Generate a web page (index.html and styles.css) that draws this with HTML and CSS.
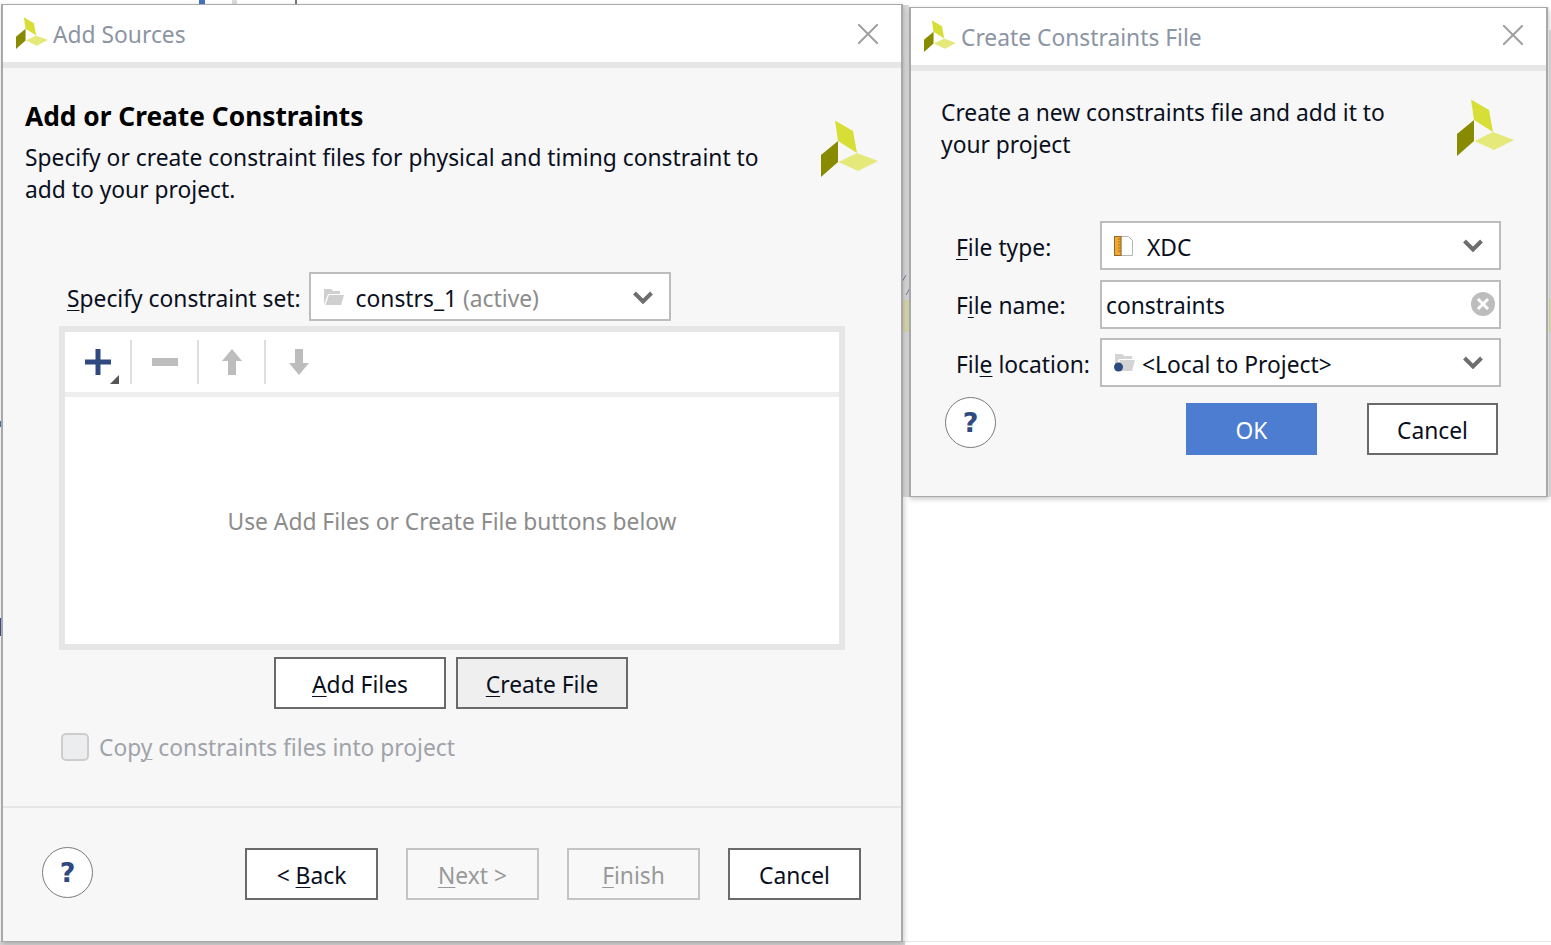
FILE: index.html
```html
<!DOCTYPE html>
<html lang="en">
<head>
    <meta charset="UTF-8">
    <title>Add Sources</title>
    <link rel="stylesheet" href="styles.css">
</head>
<body>
    <!-- scraps of the window behind -->
    <div class="scrap scrap-blue"></div>
    <div class="scrap scrap-gray"></div>
    <div class="scrap scrap-dark"></div>
    <div class="scrap scrap-gap"></div>
    <div class="scrap scrap-right"></div>
    <div class="scrap scrap-yellow"></div>
    <div class="scrap scrap-yellow2"></div>
    <div class="scrap scrap-leftblue"></div>
    <div class="scrap scrap-leftblue2"></div>
    <div class="scrap scrap-bottom"></div>
    <div class="scrap scrap-line"></div>
    <svg class="scrap scrap-ticks" viewBox="0 0 8 20"><path d="M0 7L4 0M4 20L8 13"/></svg>

    <!-- Add Sources -->
    <div class="dialog sources">
        <div class="titlebar">
            <svg class="logo-small" viewBox="0 0 57 57"><use href="#logo"/></svg>
            <span class="title-text">Add Sources</span>
            <svg class="close" viewBox="0 0 20 20"><path d="M0 0L20 20M20 0L0 20"/></svg>
        </div>
        <div class="body sources-body">
            <div class="intro">
                <div class="intro-text">
                    <h1>Add or Create Constraints</h1>
                    <p>Specify or create constraint files for physical and timing constraint to add to your project.</p>
                </div>
                <svg class="logo-big" viewBox="0 0 57 57">
                    <defs>
                        <g id="logo">
                            <polygon points="14,0.500 32,11 36,33 17,21" fill="#d7df36"/>
                            <polygon points="0,35 17,21 17,42 0,57" fill="#888a00"/>
                            <polygon points="17.500,42 36,33 57,41 37,51" fill="#e4e97a"/>
                        </g>
                    </defs>
                    <use href="#logo"/>
                </svg>
            </div>
            <div class="set-row">
                <label class="lbl"><u>S</u>pecify constraint set:</label>
                <div class="combo set-combo">
                    <svg class="folder" viewBox="0 0 21 18"><path d="M1 17V1h7l2 2h7v3H5L1 17z" fill="#cfcfcf"/><path d="M2.500 17L6 7h15l-3 10z" fill="#cfcfcf"/></svg>
                    <span class="combo-text">constrs_1 <span class="muted">(active)</span></span>
                    <svg class="chevron" viewBox="0 0 20 13"><path d="M1.500 2L10 10.500 18.500 2"/></svg>
                </div>
            </div>
            <div class="files">
                <div class="toolbar">
                    <div class="tool tool-add">
                        <svg viewBox="0 0 26 26"><path d="M10.500 0h5v10.500H26v5H15.500V26h-5V15.500H0v-5h10.500z" fill="#2f4a80"/></svg>
                        <span class="corner"></span>
                    </div>
                    <div class="tool">
                        <svg viewBox="0 0 26 8" class="minus"><rect width="26" height="8" fill="#bdbdbd"/></svg>
                    </div>
                    <div class="tool">
                        <svg viewBox="0 0 20 26" class="arrow"><path d="M10 0l10 12h-6v14H6V12H0z" fill="#bdbdbd"/></svg>
                    </div>
                    <div class="tool last">
                        <svg viewBox="0 0 20 26" class="arrow"><path d="M6 0h8v14h6L10 26 0 14h6z" fill="#bdbdbd"/></svg>
                    </div>
                </div>
                <div class="file-list">Use Add Files or Create File buttons below</div>
            </div>
            <div class="file-buttons">
                <button class="btn wide"><u>A</u>dd Files</button>
                <button class="btn wide focused"><u>C</u>reate File</button>
            </div>
            <div class="copy-row">
                <span class="check"></span>
                <span class="copy-text">Cop<u>y</u> constraints files into project</span>
            </div>
        </div>
        <div class="footer">
            <div class="help">?</div>
            <div class="footer-buttons">
                <button class="btn">&lt;&nbsp;<u>B</u>ack</button>
                <button class="btn off"><u>N</u>ext &gt;</button>
                <button class="btn off"><u>F</u>inish</button>
                <button class="btn">Cancel</button>
            </div>
        </div>
    </div>

    <!-- Create Constraints File -->
    <div class="dialog create">
        <div class="titlebar">
            <svg class="logo-small" viewBox="0 0 57 57"><use href="#logo"/></svg>
            <span class="title-text">Create Constraints File</span>
            <svg class="close" viewBox="0 0 20 20"><path d="M0 0L20 20M20 0L0 20"/></svg>
        </div>
        <div class="body create-body">
            <div class="intro">
                <p class="create-text">Create a new constraints file and add it to your project</p>
                <svg class="logo-big" viewBox="0 0 57 57"><use href="#logo"/></svg>
            </div>
            <div class="form">
                <label class="lbl"><u>F</u>ile type:</label>
                <div class="combo">
                    <svg class="xdc" viewBox="0 0 19 20"><path d="M7 .500h7.500l4 4v15H7z" fill="#fff" stroke="#b5b5b5"/><rect x=".500" y=".500" width="6.500" height="19" fill="#f5a830" stroke="#8d6a2c"/><path d="M4 3h3M4 6h3M4 9h3M4 12h3M4 15h3" stroke="#a8711a"/></svg>
                    <span class="combo-text">XDC</span>
                    <svg class="chevron" viewBox="0 0 20 13"><path d="M1.500 2L10 10.500 18.500 2"/></svg>
                </div>
                <label class="lbl">F<u>i</u>le name:</label>
                <div class="combo name">
                    <span class="combo-text">constraints</span>
                    <svg class="clear" viewBox="0 0 24 24"><circle cx="12" cy="12" r="12" fill="#bdbdbd"/><path d="M7 7l10 10M17 7L7 17" stroke="#fff" stroke-width="3"/></svg>
                </div>
                <label class="lbl">Fil<u>e</u> location:</label>
                <div class="combo">
                    <svg class="loc" viewBox="0 0 21 19"><path d="M1 14V1h7l2 2h8v3H5L2 14z" fill="#d4d4d4"/><path d="M3 18l3-11h15l-3 11z" fill="#d4d4d4"/><circle cx="4.500" cy="14" r="4.500" fill="#2f4a80"/></svg>
                    <span class="combo-text">&lt;Local to Project&gt;</span>
                    <svg class="chevron" viewBox="0 0 20 13"><path d="M1.500 2L10 10.500 18.500 2"/></svg>
                </div>
            </div>
            <div class="create-foot">
                <div class="help">?</div>
                <div class="create-buttons">
                    <button class="btn primary">OK</button>
                    <button class="btn">Cancel</button>
                </div>
            </div>
        </div>
    </div>
</body>
</html>
```

FILE: styles.css
```css
*{
    box-sizing: border-box;
}
html,body{
    margin: 0;
    height: 100%;
    overflow: hidden;
}
body{
    position: relative;
    background: #fff;
    font-family: "Noto Sans", "Open Sans", sans-serif;
    font-size: 22.8px;
    color: #0a0f1e;
}
u{
    text-underline-offset: 3px;
    text-decoration-thickness: 1px;
}
.scrap{
    position: absolute;
}
.scrap-blue{
    left: 199px;
    top: 0;
    width: 6px;
    height: 6px;
    background: #4472c4;
}
.scrap-gray{
    left: 232px;
    top: 0;
    width: 5px;
    height: 6px;
    background: #dcdcdc;
}
.scrap-dark{
    left: 295px;
    top: 0;
    width: 2px;
    height: 4px;
    background: #777;
}
.scrap-gap{
    left: 903px;
    top: 5px;
    width: 6px;
    height: 492px;
    background: #dcdcdc;
}
.scrap-right{
    left: 1549px;
    top: 30px;
    width: 2px;
    height: 467px;
    background: #e2e2e2;
}
.scrap-yellow{
    left: 903px;
    top: 300px;
    width: 6px;
    height: 32px;
    background: #dcdcb0;
}
.scrap-yellow2{
    left: 1549px;
    top: 299px;
    width: 2px;
    height: 33px;
    background: #dfdfb8;
}
.scrap-leftblue{
    left: 0;
    top: 618px;
    width: 3px;
    height: 18px;
    background: #3a4fa0;
}
.scrap-leftblue2{
    left: 0;
    top: 421px;
    width: 3px;
    height: 6px;
    background: #4472c4;
}
.scrap-bottom{
    left: 0;
    top: 941px;
    width: 905px;
    height: 4px;
    background: #d8d8d8;
}
.scrap-line{
    left: 905px;
    top: 941px;
    width: 646px;
    height: 1px;
    background: #e6e6e6;
}
.scrap-ticks{
    left: 902px;
    top: 275px;
    width: 8px;
    height: 20px;
}
.scrap-ticks path{
    stroke: #6f7f9c;
    stroke-width: 1;
    fill: none;
}

/* windows on the desktop */
.dialog{
    position: absolute;
    display: flex;
    flex-direction: column;
    background: #f7f7f7;
    border: 1px solid #a9a9a9;
    border-left-width: 2px;
    border-right-width: 2px;
    box-shadow: 1px 2px 5px rgba(0,0,0,0.22);
}
.sources{
    left: 1px;
    top: 4px;
    width: 902px;
    height: 938px;
}
.create{
    left: 909px;
    top: 7px;
    width: 639px;
    height: 490px;
}
.titlebar{
    display: flex;
    align-items: center;
    height: 63px;
    flex-shrink: 0;
    padding: 0 22px 0 13px;
    background: #fff;
    border-bottom: 6px solid #e6e6e6;
    background-clip: padding-box;
}
.logo-small{
    width: 32px;
    height: 32px;
    margin: -2px 5px 0 0;
}
.title-text{
    flex: 1;
    padding-top: 2px;
    color: #8c95a4;
}
.close{
    width: 20px;
    height: 20px;
    margin-right: 1px;
}
.create .close{
    margin: -4px 1px 0 0;
}
.close path{
    stroke: #a0a0a0;
    stroke-width: 2;
    fill: none;
}
.body{
    flex: 1;
}
.sources-body{
    padding: 30px 56px 0 22px;
}
.intro{
    display: flex;
    justify-content: space-between;
}
.intro-text{
    width: 760px;
}
h1{
    margin: 0 0 8px;
    font-size: 26.3px;
    line-height: 36px;
    font-weight: 700;
    color: #000;
}
p{
    margin: 0;
    line-height: 32px;
}
.logo-big{
    width: 57px;
    height: 57px;
    margin: 22px -33px 0 0;
    flex-shrink: 0;
}
.lbl{
    padding-top: 3px;
    white-space: nowrap;
}
.set-row{
    display: flex;
    align-items: center;
    gap: 8px;
    margin: 66px 0 5px 42px;
}
.combo{
    display: flex;
    align-items: center;
    height: 49px;
    padding: 0 15px 0 12px;
    background: #fff;
    border: 2px solid #bdbdbd;
}
.set-combo{
    width: 362px;
}
.set-combo .chevron{
    margin: 2px 1px 0 0;
}
.combo-text{
    flex: 1;
    padding-top: 3px;
}
.muted{
    color: #8c8c8c;
}
.folder{
    width: 21px;
    height: 18px;
    margin-right: 12px;
}
.chevron{
    width: 20px;
    height: 13px;
    margin-right: 1px;
}
.chevron path{
    stroke: #6e6e6e;
    stroke-width: 4;
    fill: none;
}
.files{
    width: 786px;
    margin-left: 34px;
    border: 6px solid #e6e6e6;
    background: #fff;
}
.toolbar{
    display: flex;
    height: 65px;
    padding: 8px 0;
    border-bottom: 5px solid #eee;
}
.tool{
    position: relative;
    display: flex;
    align-items: center;
    justify-content: center;
    width: 67px;
    border-right: 2px solid #dedede;
}
.tool.last{
    padding-right: 2px;
    border-right: 0;
}
.tool-add svg{
    width: 26px;
    height: 26px;
}
.minus{
    width: 26px;
    height: 8px;
}
.arrow{
    width: 20px;
    height: 26px;
}
.corner{
    position: absolute;
    right: 11px;
    bottom: 0;
    width: 0;
    height: 0;
    border-left: 9px solid transparent;
    border-bottom: 9px solid #555;
}
.file-list{
    display: flex;
    align-items: center;
    justify-content: center;
    height: 247px;
    padding-top: 2px;
    color: #8c8c8c;
}
.file-buttons{
    display: flex;
    gap: 10px;
    margin: 7px 0 0 249px;
}
.btn{
    width: 133px;
    height: 52px;
    padding: 3px 0 0;
    font: inherit;
    color: inherit;
    background: #fff;
    border: 2px solid #6a6a6a;
}
.wide{
    width: 172px;
}
.focused{
    background: #efefef;
}
.off{
    color: #999;
    background: #f8f8f8;
    border-color: #c4c4c4;
}
.primary{
    color: #fff;
    background: #4d7dd1;
    border-color: #4d7dd1;
}
.copy-row{
    display: flex;
    align-items: center;
    gap: 10px;
    margin: 21px 0 0 36px;
}
.check{
    width: 28px;
    height: 28px;
    background: #ebedef;
    border: 2px solid #cdcdcd;
    border-radius: 5px;
}
.copy-text{
    padding-top: 2px;
    color: #9fa3aa;
}
.footer{
    display: flex;
    align-items: center;
    justify-content: space-between;
    height: 135px;
    padding: 0 40px 2px 39px;
    border-top: 2px solid #e6e6e6;
}
.footer .help{
    margin-top: -2px;
}
.footer-buttons{
    display: flex;
    gap: 28px;
}
.help{
    display: flex;
    align-items: center;
    justify-content: center;
    width: 51px;
    height: 51px;
    background: #fff;
    border: 1px solid #7a7a7a;
    border-radius: 50%;
    font-family: "DejaVu Sans", sans-serif;
    font-size: 27px;
    font-weight: 700;
    color: #2f4a80;
}
.create-body{
    padding: 26px 45px 0 30px;
}
.create-text{
    width: 470px;
}
.create-body .logo-big{
    margin: 2px -13px 0 0;
}
.form{
    display: grid;
    grid-template-columns: 144px 1fr;
    align-items: center;
    row-gap: 9.500px;
    margin: 60px 0 0 15px;
}
.name{
    padding: 0 4px;
}
.clear{
    width: 24px;
    height: 24px;
}
.xdc{
    width: 19px;
    height: 20px;
    margin-right: 14px;
}
.loc{
    width: 21px;
    height: 19px;
    margin-right: 7px;
}
.create-foot{
    display: flex;
    justify-content: space-between;
    margin: 10px 3px 0 4px;
}
.create-buttons{
    display: flex;
    gap: 50px;
    margin-top: 6px;
}
.create-buttons .btn{
    width: 131px;
}
```
